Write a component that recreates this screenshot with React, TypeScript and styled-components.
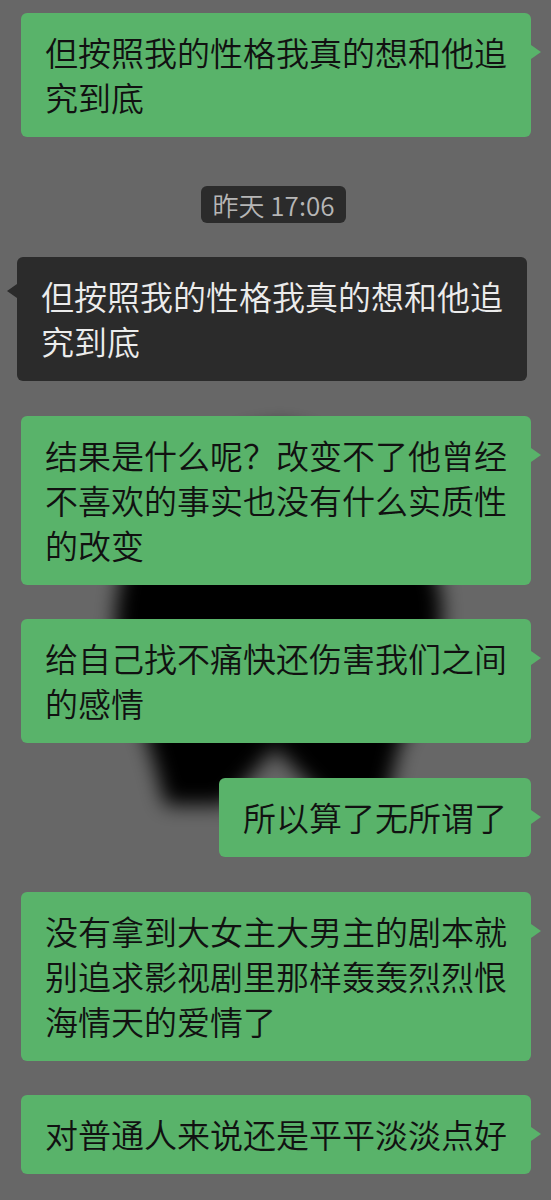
import React from 'react'
import styled, {createGlobalStyle} from 'styled-components'

const GlobalStyle = createGlobalStyle`
  html, body {
    margin: 0;
    padding: 0;
    background: #676767;
    overflow: hidden;
  }
  body {
    font-family: "Noto Sans CJK SC", "Noto Sans", sans-serif;
  }
`

interface Message {
  kind: 'self' | 'other' | 'time'
  text: string
}

const messages: Message[] = [
  {kind: 'self', text: '但按照我的性格我真的想和他追究到底'},
  {kind: 'time', text: '昨天 17:06'},
  {kind: 'other', text: '但按照我的性格我真的想和他追究到底'},
  {kind: 'self', text: '结果是什么呢？改变不了他曾经不喜欢的事实也没有什么实质性的改变'},
  {kind: 'self', text: '给自己找不痛快还伤害我们之间的感情'},
  {kind: 'self', text: '所以算了无所谓了'},
  {kind: 'self', text: '没有拿到大女主大男主的剧本就别追求影视剧里那样轰轰烈烈恨海情天的爱情了'},
  {kind: 'self', text: '对普通人来说还是平平淡淡点好'},
]

// blurred dark shape sitting behind the chat
const Smudge: React.FC = () => (
  <SmudgeLayer width="551" height="1200" viewBox="0 0 551 1200">
    <defs>
      <filter id="soft" x="-20%" y="-20%" width="140%" height="140%">
        <feGaussianBlur stdDeviation="10" />
      </filter>
    </defs>
    <path
      filter="url(#soft)"
      fill="#000"
      d="M283 428 C330 430 420 510 440 590 C450 650 420 710 400 745 L385 805 L330 805 L275 748 L225 805 L165 805 C155 760 140 720 125 680 C110 640 112 590 135 535 C170 465 235 428 283 428 Z"
    />
  </SmudgeLayer>
)

const App: React.FC = () => {
  return (
    <>
      <GlobalStyle />
      <Screen>
        <Smudge />
        <Chat>
          {messages.map((m, i) => {
            if (m.kind === 'time') {
              return (
                <TimeRow key={i}>
                  <TimeTag>{m.text}</TimeTag>
                </TimeRow>
              )
            }
            return (
              <Row key={i} side={m.kind}>
                <Bubble side={m.kind}>{m.text}</Bubble>
              </Row>
            )
          })}
        </Chat>
      </Screen>
    </>
  )
}

const Screen = styled.div`
  position: relative;
  width: 551px;
  height: 1200px;
  overflow: hidden;
  background: #676767;
`

const SmudgeLayer = styled.svg`
  position: absolute;
  left: 0;
  top: 0;
  z-index: 0;
`

const Chat = styled.div`
  position: relative;
  z-index: 1;
  display: flex;
  flex-direction: column;
  gap: 34.6px;
  padding-top: 13px;
`

const Row = styled.div<{side: 'self' | 'other'}>`
  display: flex;
  justify-content: ${(p) => (p.side === 'self' ? 'flex-end' : 'flex-start')};
  padding: ${(p) => (p.side === 'self' ? '0 20px 0 0' : '0 0 0 17px')};
`

const TimeRow = styled.div`
  display: flex;
  justify-content: center;
  padding-right: 4px;
  margin-top: 14px;
`

const TimeTag = styled.div`
  background: #2b2b2b;
  color: #b6b6b6;
  font-size: 26px;
  font-weight: 350;
  line-height: 37px;
  padding: 0 12px;
  border-radius: 6px;
`

const Bubble = styled.div<{side: 'self' | 'other'}>`
  position: relative;
  max-width: 510px;
  box-sizing: border-box;
  padding: 17px 24px;
  font-size: 33px;
  font-weight: 350;
  line-height: 45px;
  border-radius: 6px;
  word-break: break-all;
  background: ${(p) => (p.side === 'self' ? '#59b36a' : '#2b2b2b')};
  color: ${(p) => (p.side === 'self' ? '#111' : '#ececec')};

  &::after {
    content: '';
    position: absolute;
    width: 0;
    height: 0;
    border-top: 7.5px solid transparent;
    border-bottom: 7.5px solid transparent;
    top: ${(p) => (p.side === 'self' ? '32px' : '27px')};
    ${(p) =>
      p.side === 'self'
        ? `right: -10px; border-left: 10px solid #59b36a;`
        : `left: -10px; border-right: 10px solid #2b2b2b;`}
  }
`

export default App
